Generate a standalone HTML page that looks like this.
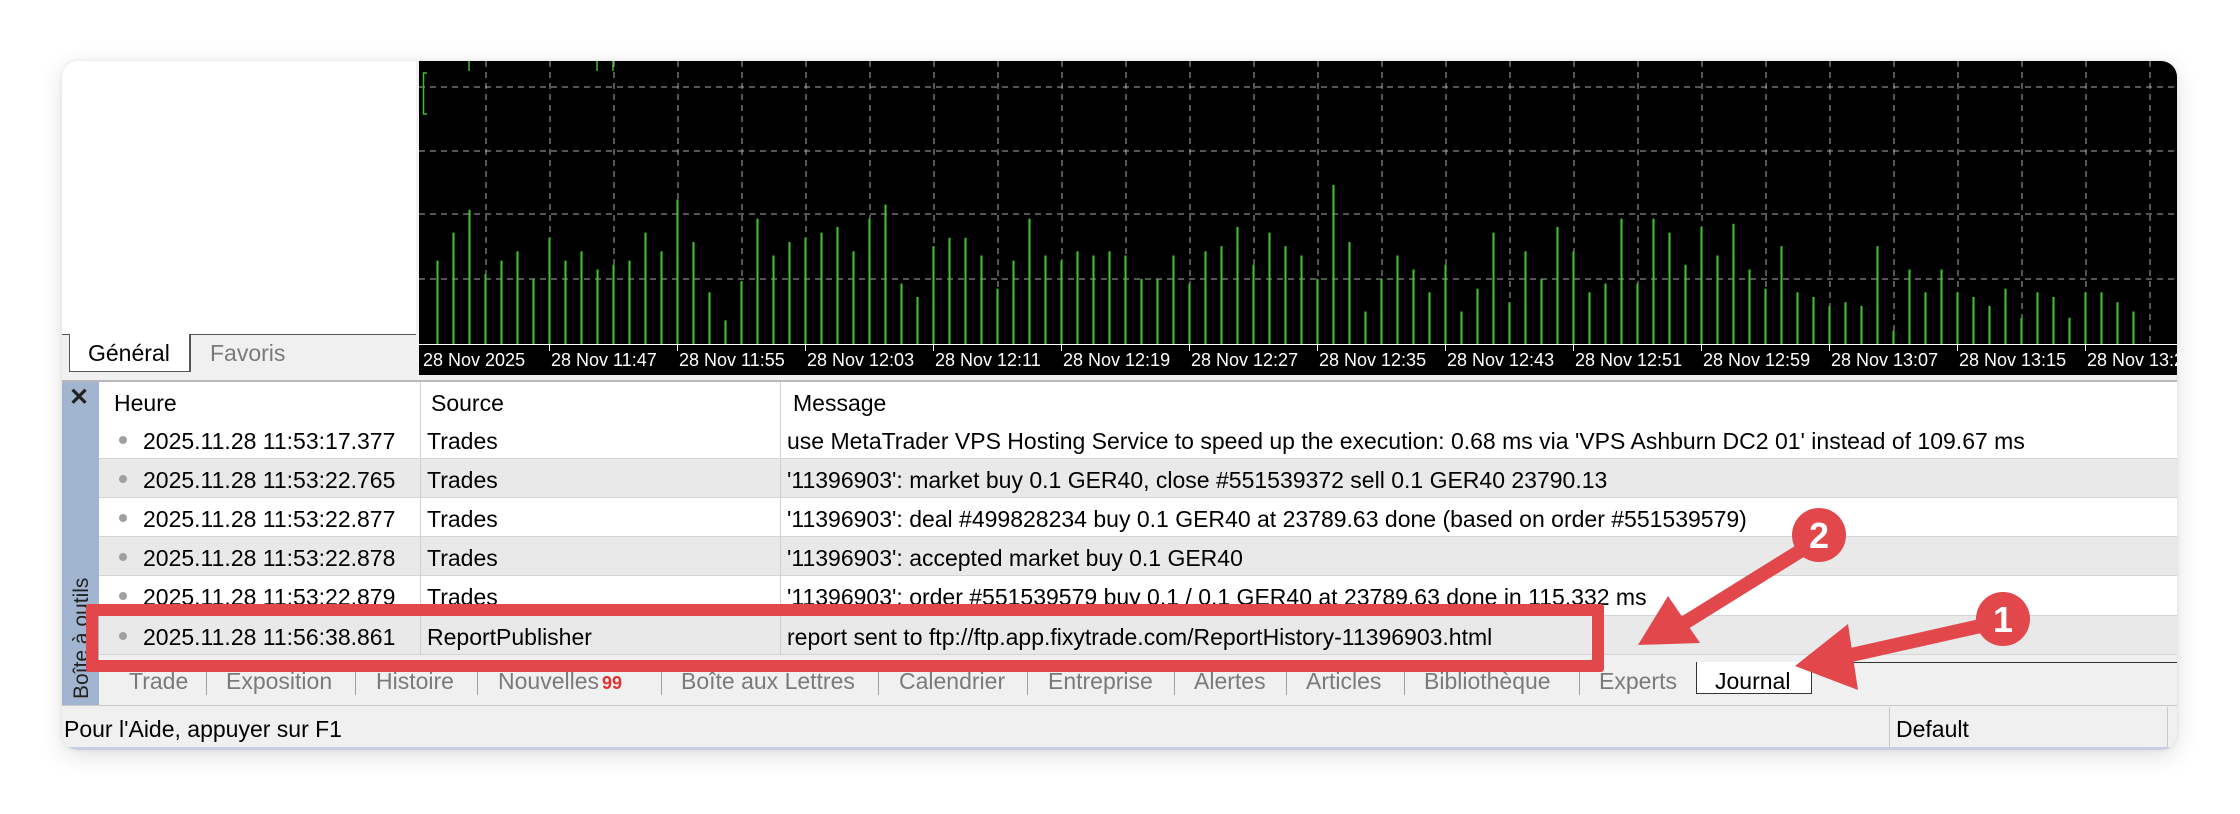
<!DOCTYPE html>
<html><head><meta charset="utf-8"><style>
*{margin:0;padding:0;box-sizing:border-box}
body{width:2240px;height:814px;background:#fff;position:relative;overflow:hidden;font-family:"Liberation Sans",sans-serif;font-size:23px;color:#000}
.win{position:absolute;left:62px;top:61px;width:2115px;height:689px;border-radius:16px;overflow:hidden;background:#f0f0f0;box-shadow:0 6px 24px rgba(0,0,0,.12),0 0 4px rgba(0,0,0,.08)}
.abs{position:absolute}
.t{position:absolute;white-space:nowrap}
.row{position:absolute;left:37px;right:0;height:39px;border-bottom:1px solid #d4d4d4}
.row .dot{position:absolute;left:20px;top:16px;width:8px;height:8px;border-radius:50%;background:#a0a0a0}
.row .c1{position:absolute;left:44px;top:8px}
.row .c2{position:absolute;left:328px;top:8px}
.row .c3{position:absolute;left:688px;top:8px}
.tab{position:absolute;top:607px;color:#7a7a7a;white-space:nowrap}
.sep{position:absolute;top:608px;width:1px;height:26px;background:#a0a0a0}
</style></head><body>
<div class="win">
  <div class="abs" style="left:0;top:0;width:354px;height:273px;background:#fff"></div>
  <div class="abs" style="left:0;top:273px;width:354px;height:1px;background:#555"></div>
  <div class="abs" style="left:7px;top:273px;width:122px;height:38px;background:#fff;border:1px solid #555;border-top:none;border-right:2px solid #555"></div>
  <div class="t" style="left:26px;top:279px">Général</div>
  <div class="t" style="left:148px;top:279px;color:#7a7a7a">Favoris</div>
  <svg class="abs" style="left:357px;top:0" width="1758" height="314" id="chart">
    <rect width="1758" height="314" fill="#000"/>
  </svg>
  <div class="abs" style="left:0;top:319px;width:2115px;height:2px;background:#b8b8b8"></div>
  <div class="abs" style="left:0;top:321px;width:37px;height:323px;background:#a2b5d0"></div>
  <div class="t" style="left:7px;top:322px;font-size:24px;font-weight:bold;color:#222">✕</div>
  <div class="t" style="left:-40px;top:566px;transform:rotate(-90deg);transform-origin:center;width:120px;font-size:21px;color:#222">Boîte à outils</div>
  <div class="abs" style="left:37px;top:321px;right:0;height:273px;background:#fff"></div>
  <div class="t" style="left:52px;top:329px">Heure</div>
  <div class="t" style="left:369px;top:329px">Source</div>
  <div class="t" style="left:731px;top:329px">Message</div>
  <div class="row" style="top:359px;background:#fff"><span class="dot"></span><span class="c1">2025.11.28 11:53:17.377</span><span class="c2">Trades</span><span class="c3">use MetaTrader VPS Hosting Service to speed up the execution: 0.68 ms via 'VPS Ashburn DC2 01' instead of 109.67 ms</span></div>
  <div class="row" style="top:398px;background:#e9e9e9"><span class="dot"></span><span class="c1">2025.11.28 11:53:22.765</span><span class="c2">Trades</span><span class="c3">'11396903': market buy 0.1 GER40, close #551539372 sell 0.1 GER40 23790.13</span></div>
  <div class="row" style="top:437px;background:#fff"><span class="dot"></span><span class="c1">2025.11.28 11:53:22.877</span><span class="c2">Trades</span><span class="c3">'11396903': deal #499828234 buy 0.1 GER40 at 23789.63 done (based on order #551539579)</span></div>
  <div class="row" style="top:476px;background:#e9e9e9"><span class="dot"></span><span class="c1">2025.11.28 11:53:22.878</span><span class="c2">Trades</span><span class="c3">'11396903': accepted market buy 0.1 GER40</span></div>
  <div class="row" style="top:515px;background:#fff;height:40px"><span class="dot"></span><span class="c1">2025.11.28 11:53:22.879</span><span class="c2">Trades</span><span class="c3">'11396903': order #551539579 buy 0.1 / 0.1 GER40 at 23789.63 done in 115.332 ms</span></div>
  <div class="row" style="top:555px;background:#e9e9e9"><span class="dot"></span><span class="c1">2025.11.28 11:56:38.861</span><span class="c2">ReportPublisher</span><span class="c3">report sent to ftp://ftp.app.fixytrade.com/ReportHistory-11396903.html</span></div>
  <div class="abs" style="left:358px;top:321px;width:1px;height:273px;background:#d0d0d0"></div>
  <div class="abs" style="left:718px;top:321px;width:1px;height:273px;background:#d0d0d0"></div>
  <div class="abs" style="left:1634px;top:601px;width:481px;height:1px;background:#333"></div>
  <div class="abs" style="left:1634px;top:601px;width:116px;height:32px;background:#fff;border:1px solid #333;border-top:none"></div>
  <div class="tab" style="left:67px">Trade</div><div class="sep" style="left:144px"></div>
  <div class="tab" style="left:164px">Exposition</div><div class="sep" style="left:293px"></div>
  <div class="tab" style="left:314px">Histoire</div><div class="sep" style="left:415px"></div>
  <div class="tab" style="left:436px">Nouvelles<b style="color:#e03030;font-size:18px;margin-left:3px">99</b></div><div class="sep" style="left:599px"></div>
  <div class="tab" style="left:619px">Boîte aux Lettres</div><div class="sep" style="left:816px"></div>
  <div class="tab" style="left:837px">Calendrier</div><div class="sep" style="left:965px"></div>
  <div class="tab" style="left:986px">Entreprise</div><div class="sep" style="left:1112px"></div>
  <div class="tab" style="left:1132px">Alertes</div><div class="sep" style="left:1224px"></div>
  <div class="tab" style="left:1244px">Articles</div><div class="sep" style="left:1342px"></div>
  <div class="tab" style="left:1362px">Bibliothèque</div><div class="sep" style="left:1517px"></div>
  <div class="tab" style="left:1537px">Experts</div>
  <div class="tab" style="left:1653px;color:#000">Journal</div>
  <div class="abs" style="left:0;top:644px;width:2115px;height:1px;background:#c8c8c8"></div>
  <div class="t" style="left:2px;top:655px">Pour l'Aide, appuyer sur F1</div>
  <div class="abs" style="left:1827px;top:646px;width:1px;height:40px;background:#c8c8c8"></div>
  <div class="abs" style="left:2105px;top:646px;width:1px;height:40px;background:#c8c8c8"></div>
  <div class="t" style="left:1834px;top:655px">Default</div>
  <div class="abs" style="left:0;top:686px;width:2115px;height:3px;background:#c7cfe0"></div>
</div>
<div class="abs" style="left:86px;top:604px;width:1518px;height:68px;border:12px solid #e2474c;border-radius:3px"></div>
<svg class="abs" style="left:0;top:0" width="2240" height="814">
  <g stroke="#e2474c" stroke-width="14" stroke-linecap="round" fill="#e2474c">
    <line x1="1805" y1="548" x2="1665" y2="635"/>
    <line x1="1985" y1="625" x2="1820" y2="662"/>
  </g>
  <polygon points="1638,645 1668,596 1700,643" fill="#e2474c"/>
  <polygon points="1795,666 1848,624 1858,690" fill="#e2474c"/>
  <circle cx="1819" cy="535" r="27" fill="#e2474c"/>
  <circle cx="2003" cy="619" r="27" fill="#e2474c"/>
  <text x="1819" y="548" font-family="Liberation Sans" font-weight="bold" font-size="36" fill="#fff" text-anchor="middle">2</text>
  <text x="2003" y="632" font-family="Liberation Sans" font-weight="bold" font-size="36" fill="#fff" text-anchor="middle">1</text>
</svg>
<script>
(function(){
var s=document.getElementById('chart'),h='';
var ox=419,oy=61;
[87,151,214,279].forEach(function(y){h+='<line x1="0" x2="1758" y1="'+(y-oy)+'" y2="'+(y-oy)+'" stroke="#aaa" stroke-dasharray="6,5" stroke-width="1"/>';});
for(var x=486;x<2177;x+=64){h+='<line y1="0" y2="283" x1="'+(x-ox)+'" x2="'+(x-ox)+'" stroke="#aaa" stroke-dasharray="6,5" stroke-width="1"/>';}
var z=[502,448,404,528,502,484,537,458,502,484,519,510,502,448,484,384,466,563,617,542,421,492,466,458,448,437,484,421,394,546,572,474,458,458,492,556,502,421,492,502,484,492,484,
492,537,537,492,546,484,474,437,510,448,474,492,537,356,466,600,537,492,519,563,510,600,556,448,582,484,537,437,484,563,546,421,546,421,448,510,437,492,431,519,556,474,563,572,589,582,589,474,637,519,563,519,563,572,589,556,612,563,572,612,563,563,582,600];
for(var i=0;i<z.length;i++){var x=437+i*16-ox+0.5;var t=z[i]/1.926-oy;h+='<line x1="'+x+'" x2="'+x+'" y1="'+t+'" y2="283" stroke="#44c630" stroke-width="2"/>';}
h+='<line x1="0" x2="1758" y1="283.5" y2="283.5" stroke="#fff" stroke-width="1"/>';
h+='<path d="M8 12 H4.5 V53 H8" stroke="#3cbf2a" fill="none" stroke-width="1.5"/>';
[469,597,613].forEach(function(x){h+='<line x1="'+(x-ox)+'" x2="'+(x-ox)+'" y1="0" y2="10" stroke="#3cbf2a" stroke-width="1.5"/>';});
var labs=['28 Nov 2025','28 Nov 11:47','28 Nov 11:55','28 Nov 12:03','28 Nov 12:11','28 Nov 12:19','28 Nov 12:27','28 Nov 12:35','28 Nov 12:43','28 Nov 12:51','28 Nov 12:59','28 Nov 13:07','28 Nov 13:15','28 Nov 13:23'];
for(var j=0;j<labs.length;j++){var lx=(j==0?421:549+(j-1)*128)-ox;
 if(j>0)h+='<line x1="'+(lx+0.5)+'" x2="'+(lx+0.5)+'" y1="283" y2="290" stroke="#fff"/>';
 h+='<text x="'+(lx+2)+'" y="305" fill="#fff" font-family="Liberation Sans" font-size="18">'+labs[j]+'</text>';}
s.innerHTML+=h;
})();
</script>
</body></html>
